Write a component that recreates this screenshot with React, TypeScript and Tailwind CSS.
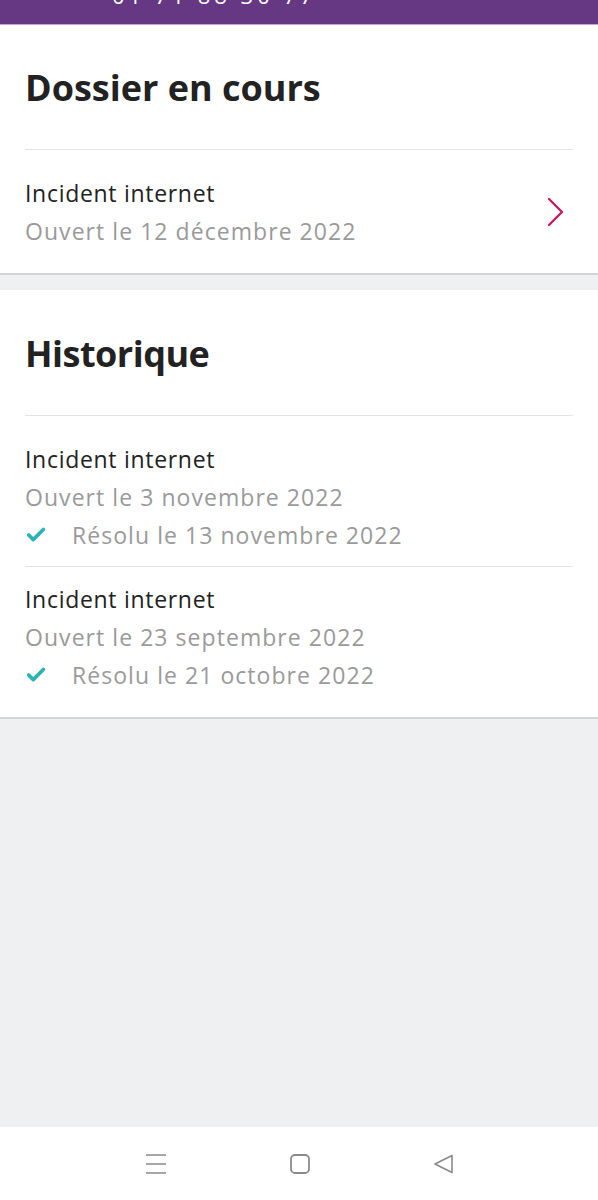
import { Check } from "lucide-react";

const font = { fontFamily: '"Open Sans", "Noto Sans", sans-serif' };

function Line({ children, muted }: { children: React.ReactNode; muted?: boolean }) {
  return (
    <div className={`h-[38px] flex items-center text-[23px] ${muted ? "text-[#9a9a9a] tracking-[1.05px]" : "text-[#222] tracking-[0.7px]"}`}>
      {children}
    </div>
  );
}

function HistoryItem({ opened, resolved, className }: { opened: string; resolved: string; className: string }) {
  return (
    <div className={className}>
      <Line>Incident internet</Line>
      <Line muted>{opened}</Line>
      <Line muted>
        <Check className="w-[22px] h-[22px] text-[#2bb3b5] mr-[25px]" strokeWidth={4} />
        <span>{resolved}</span>
      </Line>
    </div>
  );
}

export default function App() {
  return (
    <div className="h-[1200px] w-[598px] flex flex-col bg-[#eff0f2] overflow-hidden" style={font}>
      <div className="h-[25px] bg-[#663884] border-b border-[#c4a6d6] relative overflow-hidden shrink-0">
        <div className="absolute left-[112px] top-[-21px] text-white text-[22px] tracking-[4px]">01 71 88 30 77</div>
      </div>

      <section className="bg-white px-[25px] border-b-2 border-[#d3d4d6]">
        <h2 className="h-[124px] flex items-center text-[36px] font-bold text-[#222] pt-[2px]">Dossier en cours</h2>
        <div className="border-t border-[#e4e4e4] flex items-center justify-between pt-[24px] pb-[23px]">
          <div>
            <Line>Incident internet</Line>
            <Line muted>Ouvert le 12 décembre 2022</Line>
          </div>
          <svg width="18" height="30" viewBox="0 0 18 30" fill="none" stroke="#c8175d" strokeWidth="2.3" strokeLinecap="round" strokeLinejoin="round" className="mr-[9px]">
            <path d="M3 2l13 13L3 28" />
          </svg>
        </div>
      </section>

      <div className="h-[15px] shrink-0" />

      <section className="bg-white px-[25px] border-b-2 border-[#d3d4d6]">
        <h2 className="h-[125px] flex items-center text-[36px] font-bold text-[#222] pt-[3px] tracking-[-0.5px]">Historique</h2>
        <div className="border-t border-[#e4e4e4]">
          <HistoryItem className="pt-[24px] pb-[12px]" opened="Ouvert le 3 novembre 2022" resolved="Résolu le 13 novembre 2022" />
        </div>
        <div className="border-t border-[#e4e4e4]">
          <HistoryItem className="pt-[13px] pb-[23px]" opened="Ouvert le 23 septembre 2022" resolved="Résolu le 21 octobre 2022" />
        </div>
      </section>

      <div className="flex-1" />

      <nav className="h-[73px] bg-white shrink-0 flex items-center justify-center gap-[122px] pl-[2px]">
        <svg width="22" height="22" viewBox="0 0 22 22" fill="none" stroke="#8a8a8a" strokeWidth="1.6">
          <path d="M1 2h20M1 11h20M1 20h20" />
        </svg>
        <svg width="22" height="22" viewBox="0 0 22 22" fill="none" stroke="#8a8a8a" strokeWidth="1.8">
          <rect x="2" y="2" width="18" height="18" rx="4" />
        </svg>
        <svg width="22" height="22" viewBox="0 0 22 22" fill="none" stroke="#8a8a8a" strokeWidth="1.6" strokeLinejoin="round">
          <path d="M2 11L19 2.5v17z" />
        </svg>
      </nav>
    </div>
  );
}
